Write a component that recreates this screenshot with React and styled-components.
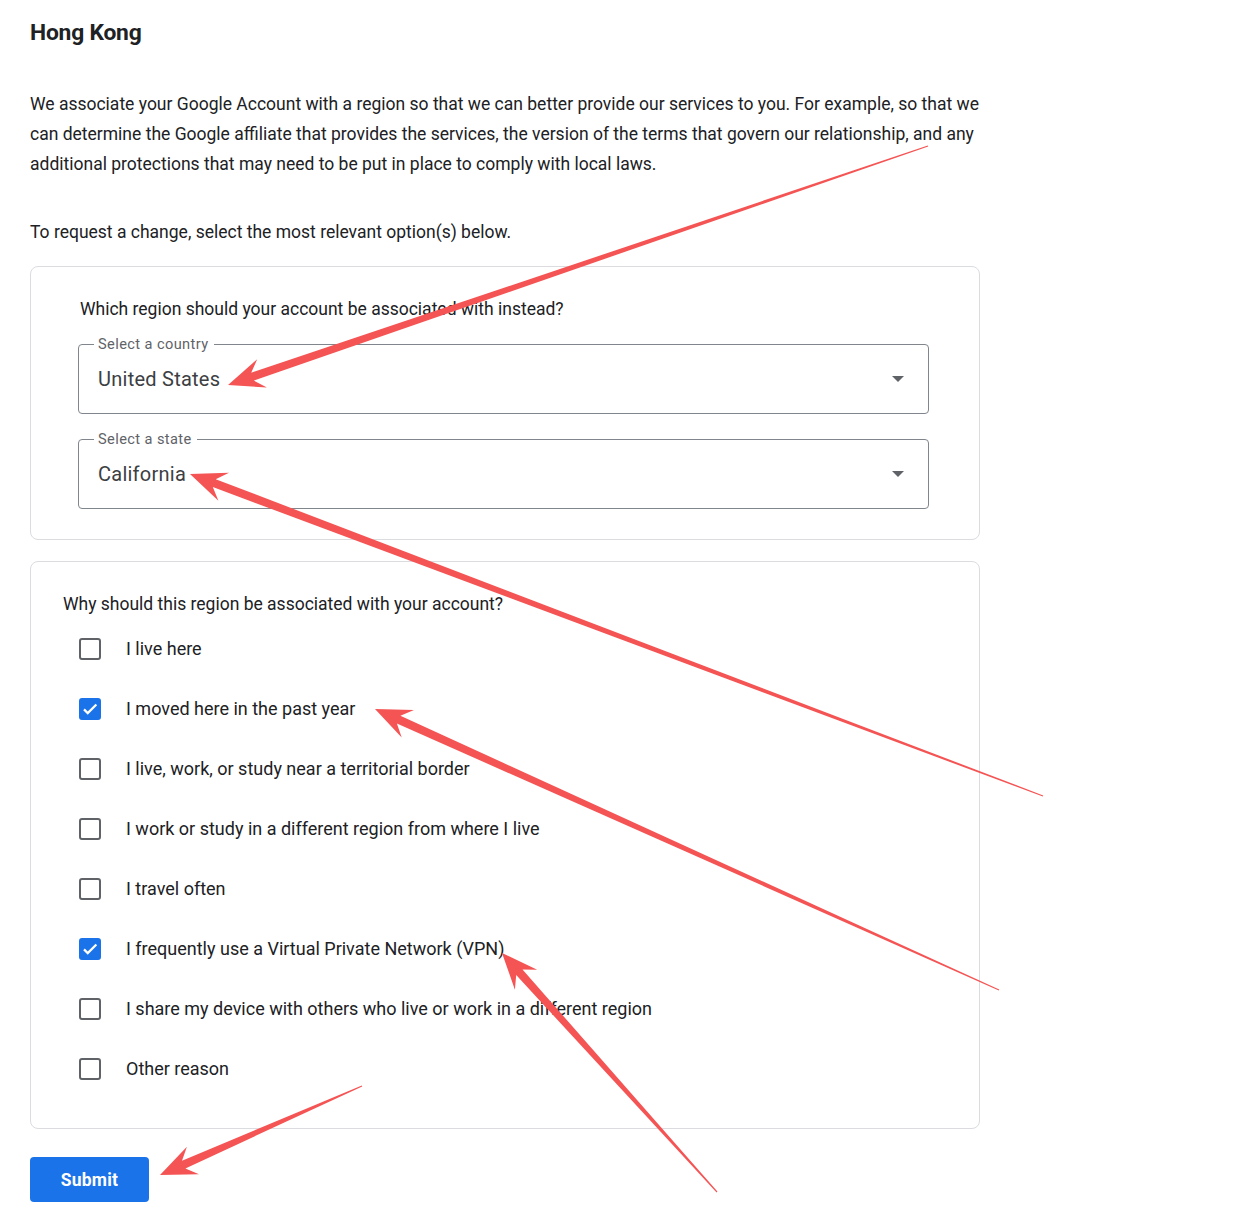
import React from 'react'
import styled, { createGlobalStyle } from 'styled-components'

const GlobalStyle = createGlobalStyle`
   body {
      margin: 0;
      background: #ffffff;
      font-family: Roboto, 'Liberation Sans', sans-serif;
      color: #202124;
   }
`

const reasons = [
   { text: 'I live here', checked: false },
   { text: 'I moved here in the past year', checked: true },
   { text: 'I live, work, or study near a territorial border', checked: false },
   { text: 'I work or study in a different region from where I live', checked: false },
   { text: 'I travel often', checked: false },
   { text: 'I frequently use a Virtual Private Network (VPN)', checked: true },
   { text: 'I share my device with others who live or work in a different region', checked: false },
   { text: 'Other reason', checked: false },
]

// annotation arrows drawn over the page: [tailX, tailY, tipX, tipY]
const arrows = [
   [928, 146, 228, 385],
   [1043, 796, 190, 474],
   [999, 990, 375, 709],
   [717, 1192, 502, 953],
   [362, 1086, 160, 1175],
]

function arrowPoints([x1, y1, x2, y2]) {
   const dx = x2 - x1
   const dy = y2 - y1
   const len = Math.hypot(dx, dy)
   const ux = dx / len
   const uy = dy / len
   const nx = -uy
   const ny = ux
   const headLen = 36
   const headHalf = 15
   const neck = headLen * 0.72
   const s0 = 0.6
   const s1 = 4.2
   const p = (d, w) => `${(x2 - ux * d + nx * w).toFixed(1)},${(y2 - uy * d + ny * w).toFixed(1)}`
   return [
      p(len, s0),
      p(neck, s1),
      p(headLen, headHalf),
      p(0, 0),
      p(headLen, -headHalf),
      p(neck, -s1),
      p(len, -s0),
   ].join(' ')
}

function Checkbox({ checked }) {
   return (
      <Box checked={checked}>
         {checked && (
            <svg width="20" height="20" viewBox="0 0 24 24">
               <path
                  d="M4 12.5l5 5L20.5 6"
                  fill="none"
                  stroke="#fff"
                  strokeWidth="3"
               />
            </svg>
         )}
      </Box>
   )
}

function SelectField({ label, value }) {
   return (
      <Field>
         <Legend>{label}</Legend>
         <FieldRow>
            <Value>{value}</Value>
            <Caret />
         </FieldRow>
      </Field>
   )
}

export default function App() {
   return (
      <Page>
         <GlobalStyle />
         <Title>Hong Kong</Title>
         <Intro>
            We associate your Google Account with a region so that we can better
            provide our services to you. For example, so that we can determine the
            Google affiliate that provides the services, the version of the terms
            that govern our relationship, and any additional protections that may
            need to be put in place to comply with local laws.
         </Intro>
         <Lead>To request a change, select the most relevant option(s) below.</Lead>

         <Card pad="30px 50px 30px 47px">
            <Question indent="2px">
               Which region should your account be associated with instead?
            </Question>
            <Fields>
               <SelectField label="Select a country" value="United States" />
               <SelectField label="Select a state" value="California" />
            </Fields>
         </Card>

         <Card pad="30px 32px 29px 32px">
            <Question>Why should this region be associated with your account?</Question>
            <List>
               {reasons.map((r) => (
                  <Row key={r.text}>
                     <Checkbox checked={r.checked} />
                     <RowLabel>{r.text}</RowLabel>
                  </Row>
               ))}
            </List>
         </Card>

         <Submit>Submit</Submit>

         <Overlay width="1240" height="1230" viewBox="0 0 1240 1230">
            {arrows.map((a) => (
               <polygon key={a.join('-')} points={arrowPoints(a)} fill="#f55454" />
            ))}
         </Overlay>
      </Page>
   )
}

const Page = styled.div`
   position: relative;
   width: 950px;
   padding: 18px 30px 28px;
`
const Title = styled.h1`
   margin: 0;
   font-size: 22.8px;
   line-height: 30px;
   font-weight: 700;
   color: #202124;
   letter-spacing: -0.2px;
`
const Intro = styled.p`
   margin: 41px 0 0;
   font-size: 17.5px;
   line-height: 30px;
   color: #202124;
`
const Lead = styled.p`
   margin: 38px 0 19px;
   font-size: 17.5px;
   line-height: 30px;
   color: #202124;
`
const Card = styled.section`
   border: 1px solid #dadce0;
   border-radius: 8px;
   padding: ${(p) => p.pad};
   margin-bottom: 21px;
`
const Question = styled.div`
   font-size: 17.5px;
   line-height: 24px;
   padding-left: ${(p) => p.indent || '0'};
   color: #202124;
`
const Fields = styled.div`
   display: flex;
   flex-direction: column;
   gap: 17px;
   margin-top: 15px;
`
const Field = styled.fieldset`
   margin: 0;
   border: 1px solid #80868b;
   border-radius: 4px;
   padding: 0 24px 0 15px;
   min-width: 0;
`
const Legend = styled.legend`
   padding: 0 5px 0 4px;
   font-size: 14.6px;
   line-height: 16px;
   color: #5f6368;
   letter-spacing: 0.4px;
`
const FieldRow = styled.div`
   display: flex;
   align-items: center;
   justify-content: space-between;
   padding: 15px 0 22px 4px;
`
const Value = styled.span`
   font-size: 20px;
   line-height: 24px;
   color: #3c4043;
   letter-spacing: 0.25px;
`
const Caret = styled.span`
   width: 0;
   height: 0;
   border-left: 6px solid transparent;
   border-right: 6px solid transparent;
   border-top: 6px solid #5f6368;
`
const List = styled.div`
   display: flex;
   flex-direction: column;
   margin-top: 3px;
   padding-left: 16px;
`
const Row = styled.label`
   display: flex;
   align-items: center;
   height: 60px;
`
const Box = styled.span`
   box-sizing: border-box;
   width: 22px;
   height: 22px;
   border-radius: 3px;
   border: 2px solid ${(p) => (p.checked ? '#1a73e8' : '#5f6368')};
   background: ${(p) => (p.checked ? '#1a73e8' : '#fff')};
   display: flex;
   align-items: center;
   justify-content: center;
   flex-shrink: 0;
`
const RowLabel = styled.span`
   margin-left: 25px;
   font-size: 18px;
   line-height: 24px;
   color: #202124;
`
const Submit = styled.button`
   margin-top: 7px;
   width: 119px;
   height: 45px;
   border: none;
   border-radius: 4px;
   background: #1a73e8;
   color: #fff;
   font-family: Roboto, 'Liberation Sans', sans-serif;
   font-size: 17.5px;
   font-weight: 700;
   letter-spacing: 0.2px;
`
const Overlay = styled.svg`
   position: absolute;
   top: 0;
   left: 0;
   pointer-events: none;
`
